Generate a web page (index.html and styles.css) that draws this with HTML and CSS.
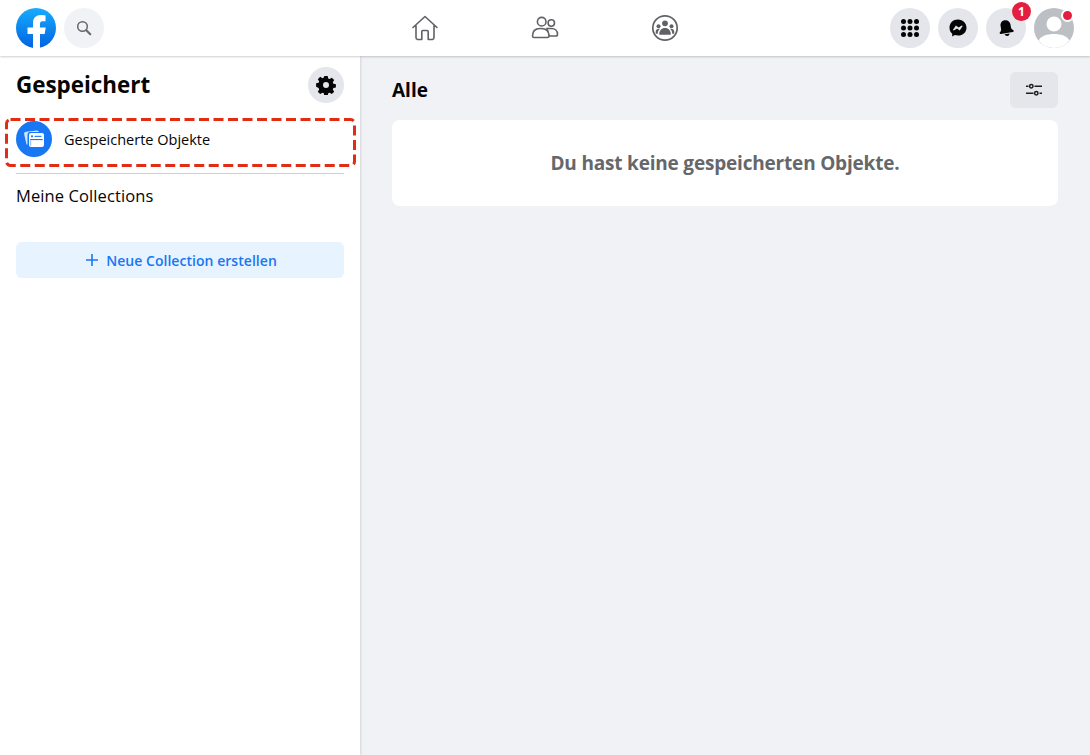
FILE: index.html
```html
<!DOCTYPE html>
<html lang="de">
<head>
    <meta charset="UTF-8">
    <title>Gespeichert</title>
    <link rel="stylesheet" href="styles.css">
</head>
<body>

    <header class="topbar">
        <div class="topbar-left">
            <svg class="logo" width="40" height="40" viewBox="0 0 40 40">
                <defs>
                    <linearGradient id="fbBlue" x1="0" y1="0" x2="0" y2="1">
                        <stop offset="0" stop-color="#18acfe"/>
                        <stop offset="1" stop-color="#0163e0"/>
                    </linearGradient>
                </defs>
                <circle cx="20" cy="20" r="20" fill="url(#fbBlue)"/>
                <path fill="#fff" d="M17 40V26h-5.500v-6.500H17v-4.600C17 10 20 7 25 7c2 0 3.800.3 4.500.5v5.700h-3c-2.400 0-2.500 1.500-2.500 3.300v2.900h5.700l-1 6.500h-4.700v14z"/>
            </svg>
            <button class="round-btn light">
                <svg width="16" height="16" viewBox="0 0 16 16" fill="none" stroke="#65676b" stroke-width="1.500">
                    <circle cx="6.500" cy="6.500" r="4.800"/>
                    <path stroke-width="2" stroke-linecap="round" d="M10.300 10.300l4 4"/>
                </svg>
            </button>
        </div>

        <nav class="topbar-nav">
            <svg width="28" height="28" viewBox="0 0 28 28" fill="none" stroke="#606266" stroke-width="1.600" stroke-linejoin="round">
                <path d="M2 13.500L14 2.500l12 11M5 11.500V23.500a2 2 0 0 0 1.500 2H10.800v-8a1 1 0 0 1 1-1h4.400a1 1 0 0 1 1 1v8h4.300a2 2 0 0 0 1.500-2V11.500" stroke-linecap="round"/>
            </svg>
            <svg width="28" height="28" viewBox="0 0 28 28" fill="none" stroke="#606266" stroke-width="1.600">
                <circle cx="10.700" cy="7.700" r="4.300"/>
                <circle cx="20.300" cy="9" r="3.200"/>
                <path fill="#fff" d="M16 14.500h4.500c3.500 0 6 2.500 6 5.700 0 1.200-.7 1.800-1.700 1.800H18z"/>
                <path fill="#fff" d="M1.500 22c0-5 3-7.500 7.500-7.500h1c5 0 8 2.500 8 7.500 0 1-.6 1.500-1.500 1.500H3c-1 0-1.500-.5-1.500-1.500z"/>
            </svg>
            <svg width="28" height="28" viewBox="0 0 28 28">
                <circle cx="14" cy="14" r="12.200" fill="none" stroke="#606266" stroke-width="1.700"/>
                <g fill="#606266">
                    <circle cx="14" cy="9.300" r="2.900"/>
                    <circle cx="7.500" cy="12.300" r="2"/>
                    <circle cx="20.500" cy="12.300" r="2"/>
                    <path d="M9 20.800c-.5 0-.8-.4-.8-.9 0-3.300 2.300-6 5.800-6s5.800 2.700 5.800 6c0 .5-.3.900-.8.900z"/>
                    <path d="M6.800 19.800H4.900c-.5-1.900-.2-5 2.900-5 .4 0 .8.100 1 .2-1.300 1.200-2 2.800-2 4.800z"/>
                    <path d="M21.200 19.800h1.900c.5-1.900.2-5-2.900-5-.4 0-.8.100-1 .2 1.300 1.200 2 2.800 2 4.800z"/>
                </g>
            </svg>
        </nav>

        <div class="topbar-right">
            <button class="round-btn">
                <svg width="20" height="20" viewBox="0 0 20 20" fill="#050505">
                    <circle cx="3.500" cy="3.500" r="2.500"/><circle cx="10" cy="3.500" r="2.500"/><circle cx="16.500" cy="3.500" r="2.500"/>
                    <circle cx="3.500" cy="10" r="2.500"/><circle cx="10" cy="10" r="2.500"/><circle cx="16.500" cy="10" r="2.500"/>
                    <circle cx="3.500" cy="16.500" r="2.500"/><circle cx="10" cy="16.500" r="2.500"/><circle cx="16.500" cy="16.500" r="2.500"/>
                </svg>
            </button>
            <button class="round-btn">
                <svg width="20" height="20" viewBox="0 0 20 20">
                    <path fill="#050505" d="M10 1.500C5 1.500 1.500 5 1.500 9.700c0 2.500 1 4.600 2.700 6v2.800l2.600-1.400c1 .3 2.100.5 3.200.5 5 0 8.500-3.600 8.500-7.900S15 1.500 10 1.500z"/>
                    <path fill="#e4e6eb" d="M4.900 11.900l3-4.400 2.700 2 3.200-2.100.9.700-3 4.300-2.700-2-3.200 2.100z"/>
                </svg>
            </button>
            <button class="round-btn bell-btn">
                <svg width="20" height="20" viewBox="0 0 20 20" fill="#050505">
                    <g transform="rotate(-10 10 10)">
                        <path d="M10 2.200c-3 0-5 2.200-5 5v2.600c0 1.300-.5 2.400-1.700 3.300-.8.700-.4 1.900.7 1.900h12c1.100 0 1.500-1.200.7-1.900-1.200-.9-1.700-2-1.700-3.300V7.200c0-2.800-2-5-5-5z"/>
                        <path d="M7.500 16h5c-.3 1.300-1.300 2.100-2.500 2.100S7.800 17.300 7.500 16z"/>
                    </g>
                </svg>
                <span class="badge">1</span>
            </button>
            <div class="avatar">
                <svg width="40" height="40" viewBox="0 0 40 40">
                    <circle cx="20" cy="20" r="20" fill="#bcc0c4"/>
                    <circle cx="20" cy="16" r="7.500" fill="#fff"/>
                    <path fill="#fff" d="M4.500 32.500C7 28 13 26 20 26s13 2 15.500 6.500A20 20 0 0 1 20 40 20 20 0 0 1 4.500 32.500z"/>
                </svg>
                <span class="dot"></span>
            </div>
        </div>
    </header>

    <div class="page">
        <aside class="sidebar">
            <div class="sidebar-head">
                <h1>Gespeichert</h1>
                <button class="round-btn small">
                    <svg width="20" height="20" viewBox="0 0 20 20">
                        <path fill="#050505" fill-rule="evenodd" d="M8.300 1h3.400l.5 2.500 1.400.6 2.200-1.400 2.400 2.400-1.400 2.200.6 1.400 2.500.5v3.400l-2.500.5-.6 1.400 1.400 2.200-2.400 2.400-2.200-1.400-1.400.6-.5 2.500H8.300l-.5-2.500-1.400-.6-2.200 1.400-2.400-2.400 1.400-2.200-.6-1.400L.1 11.700V8.300l2.500-.5.6-1.400-1.400-2.200 2.400-2.400 2.200 1.400 1.400-.6zM10 7a3 3 0 1 0 0 6 3 3 0 0 0 0-6z"/>
                    </svg>
                </button>
            </div>

            <div class="saved-item">
                <svg class="saved-icon" width="36" height="36" viewBox="0 0 36 36">
                    <circle cx="18" cy="18" r="18" fill="#1877f2"/>
                    <path fill="#fff" opacity=".8" d="M8 12.500a2 2 0 0 1 2-1.800L21 9.500q1.500 0 2 1.600H13.500A2.500 2.500 0 0 0 11.500 13.500V23.500H10.500z"/>
                    <rect x="13" y="12" width="15" height="14" rx="2" fill="#fff"/>
                    <circle cx="16" cy="15.300" r="1.100" fill="#1877f2"/>
                    <rect x="18.500" y="14.800" width="7" height="1.100" fill="#1877f2"/>
                    <rect x="14.200" y="18" width="12.600" height="1.100" fill="#1877f2"/>
                    <rect x="14.200" y="19.100" width="1" height="5.800" fill="#8dbcf8"/>
                </svg>
                <span class="saved-label">Gespeicherte Objekte</span>
                <svg class="dashed-frame" width="351" height="49" viewBox="0 0 351 49" fill="none">
                    <rect x="1.500" y="1.500" width="348" height="46" rx="4" stroke="#e22d14" stroke-width="3" stroke-dasharray="10 4.500"/>
                </svg>
            </div>

            <div class="sidebar-body">
                <h2>Meine Collections</h2>
                <button class="new-btn">
                    <svg width="12" height="12" viewBox="0 0 12 12" stroke="#1877f2" stroke-width="1.600">
                        <path d="M6 0v12M0 6h12"/>
                    </svg>
                    Neue Collection erstellen
                </button>
            </div>
        </aside>

        <main class="content">
            <div class="content-head">
                <h2>Alle</h2>
                <button class="filter-btn">
                    <svg width="16" height="16" viewBox="0 0 16 16" fill="none" stroke="#1c1d1e" stroke-width="1.500">
                        <path d="M0 4.300h2.500M8.500 4.300H16M0 11.300h7.500M13.500 11.300H16"/>
                        <circle cx="5.300" cy="4.300" r="1.700"/>
                        <circle cx="10.300" cy="11.300" r="1.700"/>
                    </svg>
                </button>
            </div>
            <div class="empty-card">Du hast keine gespeicherten Objekte.</div>
        </main>
    </div>

</body>
</html>
```

FILE: styles.css
```css
* {
    box-sizing: border-box;
}

body {
    font-family: "Open Sans", "Noto Sans", Arial, sans-serif;
    margin: 0;
    height: 755px;
    overflow: hidden;
    background-color: #f0f2f5;
    color: #050505;
}

button {
    font-family: inherit;
    border: none;
    padding: 0;
}

.topbar {
    height: 56px;
    background-color: #fff;
    box-shadow: 0 1px 2px rgba(0, 0, 0, 0.2);
    display: grid;
    grid-template-columns: 1fr auto 1fr;
    align-items: center;
    padding: 0 16px;
    position: relative;
    z-index: 2;
}

.topbar-left,
.topbar-right {
    display: flex;
    align-items: center;
    gap: 8px;
}

.topbar-right {
    justify-content: flex-end;
}

.topbar-nav {
    display: flex;
    align-items: center;
    gap: 92px;
}

.round-btn {
    width: 40px;
    height: 40px;
    border-radius: 50%;
    background-color: #e4e6eb;
    display: flex;
    align-items: center;
    justify-content: center;
    position: relative;
}

.round-btn.light {
    background-color: #f0f2f5;
}

.round-btn.small {
    width: 36px;
    height: 36px;
}

.badge {
    position: absolute;
    top: -6px;
    right: -5px;
    width: 19px;
    height: 19px;
    border-radius: 50%;
    background-color: #e41e3f;
    color: #fff;
    font-size: 12px;
    font-weight: 700;
    line-height: 19px;
    text-align: center;
}

.avatar {
    width: 40px;
    height: 40px;
    position: relative;
}

.avatar svg {
    display: block;
}

.dot {
    position: absolute;
    top: 1px;
    right: 0;
    width: 13px;
    height: 13px;
    border-radius: 50%;
    background-color: #e41e3f;
    border: 2px solid #fff;
}

.page {
    display: flex;
    height: 699px;
}

.sidebar {
    width: 360px;
    background-color: #fff;
    box-shadow: 1px 0 2px rgba(0, 0, 0, 0.12);
    padding-top: 11px;
}

.sidebar-head {
    display: flex;
    align-items: center;
    justify-content: space-between;
    padding: 0 16px;
    height: 36px;
    margin-bottom: 15px;
}

h1 {
    font-size: 22.4px;
    font-weight: 700;
    margin: 0 0 2px;
}

.saved-item {
    height: 49px;
    margin: 0 5px;
    display: flex;
    align-items: center;
    gap: 12px;
    padding: 3px 0 10px 11px;
    position: relative;
}

.dashed-frame {
    position: absolute;
    top: 0;
    left: -0.5px;
}

.saved-label {
    font-size: 14.5px;
    padding-top: 1px;
}

.sidebar-body {
    margin: 6px 16px 0;
    border-top: 1px solid #ced0d4;
}

.sidebar-body h2 {
    font-size: 16.5px;
    font-weight: 400;
    line-height: 22px;
    margin: 11px 0 35px;
    letter-spacing: 0.1px;
}

.new-btn {
    width: 100%;
    height: 36px;
    padding-left: 3px;
    border-radius: 6px;
    background-color: #e7f3ff;
    color: #1877f2;
    font-size: 14px;
    font-weight: 600;
    letter-spacing: 0.04px;
    display: flex;
    align-items: center;
    justify-content: center;
    gap: 8px;
}

.content {
    flex: 1;
    padding: 16px 32px 0;
}

.content-head {
    display: flex;
    align-items: center;
    justify-content: space-between;
    height: 36px;
    margin-bottom: 12px;
}

.content-head h2 {
    font-size: 19px;
    font-weight: 700;
    margin: 0;
}

.filter-btn {
    width: 48px;
    height: 36px;
    border-radius: 6px;
    background-color: #e4e6eb;
    display: flex;
    align-items: center;
    justify-content: center;
}

.empty-card {
    height: 86px;
    background-color: #fff;
    border-radius: 8px;
    display: flex;
    align-items: center;
    justify-content: center;
    font-size: 19px;
    font-weight: 700;
    color: #65676b;
    letter-spacing: -0.19px;
}
```
